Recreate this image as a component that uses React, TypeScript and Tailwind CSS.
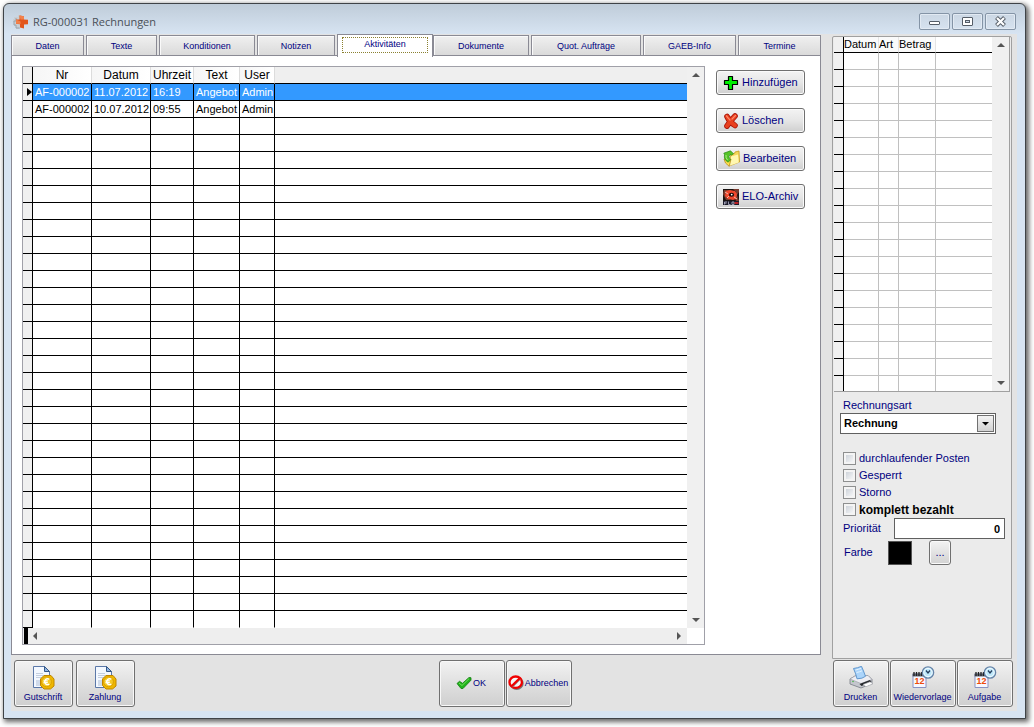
import type { ReactNode } from 'react';

type Entry = { nr: string; datum: string; uhrzeit: string; text: string; user: string };

const tabs = ['Daten', 'Texte', 'Konditionen', 'Notizen', 'Aktivitäten', 'Dokumente', 'Quot. Aufträge', 'GAEB-Info', 'Termine'];

const entries: Entry[] = [
  { nr: 'AF-000002', datum: '11.07.2012', uhrzeit: '16:19', text: 'Angebot', user: 'Admin' },
  { nr: 'AF-000002', datum: '10.07.2012', uhrzeit: '09:55', text: 'Angebot', user: 'Admin' },
];

const emptyRows = Array.from({ length: 30 }, (_, i) => i);
const sideRows = Array.from({ length: 20 }, (_, i) => i);

function AppIcon() {
  return (
    <svg width="16" height="16" viewBox="0 0 16 16">
      <path d="M1 3h4V1h3v12H6v2H3v-3H1V8H0V5h1z" fill="#c9ced3" />
      <path d="M3 4v3H1v4h2v3h4" fill="none" stroke="#9ba4ac" strokeWidth="1" />
      <path d="M6.500 1.500l4.500.8v3.200l4 .3v4.400l-4 .2v4L7 13.600v-3.400l-4-.4V5.400l3.500.1z" fill="#e2561c" />
      <path d="M6.500 1.500l4.500.8v3.200H7.500zM3 5.400l4.500 2v2.600L3 9.800z" fill="#f2814b" />
    </svg>
  );
}

function PlusIcon() {
  return (
    <svg width="16" height="16" viewBox="0 0 16 16">
      <path d="M5.500 1.500h4v4h5v4h-5v5h-4v-5h-4v-4h4z" fill="#00f000" stroke="#000" strokeWidth="1.200" strokeLinejoin="round" />
    </svg>
  );
}

function DeleteIcon() {
  return (
    <svg width="16" height="16" viewBox="0 0 16 16" strokeLinecap="round" fill="none">
      <path d="M4 3.500Q6.500 9 12 12.500M12 3Q7 8 4 13" stroke="#a81408" strokeWidth="5.600" />
      <path d="M4 3.500Q6.500 9 12 12.500M12 3Q7 8 4 13" stroke="#e8401f" strokeWidth="4" />
      <path d="M3.500 2.800Q5 5 7 7M12.500 2.500L9 6" stroke="#ff8a6a" strokeWidth="1.200" />
    </svg>
  );
}

function EditIcon() {
  return (
    <svg width="17" height="17" viewBox="0 0 17 17">
      <path d="M8 4.500l3.500-1 .5-1.500 4-1 .5 11L6 16z" fill="#f4d65a" stroke="#c79a1a" strokeWidth=".8" />
      <path d="M8 6.500l7-2 .8 8L6 16z" fill="#fff7b0" />
      <path d="M1 9l4 1.500 3-1.500-1.800 7.300L2.500 13z" fill="#ffe14c" stroke="#b8891a" strokeWidth=".8" />
      <path d="M5.200 12.200Q.300 9.500 1.600 4.800L.8 3.200 7.500.8l3 3-2.300 1.400L7 4.500Q4.500 6.500 7.500 9.800z" fill="#55c327" stroke="#258511" strokeWidth=".7" />
      <path d="M3 5Q2.500 8 4.500 10" fill="none" stroke="#a8ec7e" />
    </svg>
  );
}

function EloIcon() {
  return (
    <svg width="16" height="16" viewBox="0 0 16 16">
      <rect width="16" height="16" fill="#191311" />
      <path d="M1 1h6L4 5l3 6H3L0 5zM10 0h6v3l-2 3 2 6h-3l-2-5 2-4z" fill="#7a3a2d" />
      <path d="M3 2l4-1 5 1 2 3-1 5-3 1-5-1-3-3z" fill="#f0472c" />
      <ellipse cx="8.500" cy="5.800" rx="2.600" ry="2" fill="#1d0a08" />
      <circle cx="8.700" cy="5.600" r=".9" fill="#fff" />
      <path d="M2 3l3 2M11 8l3 2M4 9l2-2" stroke="#f6b6a7" />
      <path d="M0 12h16v4H0z" fill="#1b1b2b" />
      <path d="M1.500 15.500v-2.500H4M1.500 14.200h2M5.500 12.500v3h2M9 13h2v2.500H9z" fill="none" stroke="#b8b8cc" strokeWidth=".8" />
      <path d="M11.500 14h4" stroke="#f02020" strokeWidth="1.500" />
    </svg>
  );
}

function InvoiceIcon() {
  return (
    <svg width="24" height="24" viewBox="0 0 24 24">
      <path d="M2.500.500h11l5 5v16h-16z" fill="#f3f8ff" stroke="#5b78a8" />
      <path d="M13.500.500v5h5z" fill="#8fb4e4" stroke="#365987" />
      <path d="M5 7.500h7M5 9.500h11M5 11.500h10" stroke="#c3cedf" strokeWidth="1" />
      <path d="M5 14h6v6H5z" fill="#cfdaea" />
      <path d="M13 9.500h7l3 3.500v7l-3.500 3H13l-3.500-3.500V13z" fill="#eeb700" stroke="#c08600" />
      <circle cx="15.500" cy="15.800" r="4.900" fill="#f6ca25" stroke="#d49800" strokeWidth=".8" />
      <path d="M18.300 13.200q-4-1.600-4.600 2.500.6 4.100 4.600 2.500M12.500 14.900h4.300M12.500 16.600h4.300" fill="none" stroke="#fff" strokeWidth="1.400" />
    </svg>
  );
}

function CheckIcon() {
  return (
    <svg width="16" height="14" viewBox="0 0 16 14">
      <path d="M1 7.500l2.500-2.200 3 2L13 1.500l2 .200v2.500L7 12.500H5z" fill="#21b51b" stroke="#137b10" strokeWidth=".8" strokeLinejoin="round" />
      <path d="M3 7l3 2.500 7-6.800" fill="none" stroke="#74dd5e" />
    </svg>
  );
}

function CancelIcon() {
  return (
    <svg width="16" height="15" viewBox="0 0 16 15">
      <ellipse cx="8.700" cy="8.400" rx="6" ry="5.500" fill="none" stroke="#777" strokeWidth="2" />
      <ellipse cx="7.700" cy="7.200" rx="6.200" ry="5.700" fill="#f7f7f7" stroke="#f00000" strokeWidth="2.300" />
      <path d="M4.300 12L12.200 4" stroke="#888" strokeWidth="1.500" />
      <path d="M3.500 11.300L11.700 3.200" stroke="#f00000" strokeWidth="2.300" />
    </svg>
  );
}

function PrinterIcon() {
  return (
    <svg width="24" height="24" viewBox="0 0 24 24">
      <path d="M1 13l5-3 13-.500 4 4v4l-11 4.500L1 18z" fill="#c5c7ce" stroke="#777b84" strokeWidth=".8" />
      <path d="M1 13l5-3 13-.500 4 4-11 4z" fill="#ededf2" stroke="#989ba4" strokeWidth=".6" />
      <path d="M4.500 2.500q4-.500 8-2.200 2 4.500 4 10-3 2.500-8.500 2.500Q7 8 4.500 2.500z" fill="#abd4fa" stroke="#568fc8" strokeWidth=".9" />
      <path d="M6.500 4q3-.500 5.500-1.700M7.500 6.500q3-.500 5.500-1.700" stroke="#e4f3ff" fill="none" />
      <path d="M10.500 18l10.500-4 1.500 2-10 4z" fill="#26282c" />
      <path d="M14 18.500l7-2.700 3 2-7 2.900z" fill="#fff" stroke="#9a9ca2" strokeWidth=".6" />
      <circle cx="4" cy="15.500" r=".8" fill="#45b545" />
    </svg>
  );
}

function ReminderIcon() {
  return (
    <svg width="24" height="24" viewBox="0 0 24 24">
      <path d="M2 8h13v13.500H2z" fill="#f6f7ff" stroke="#8892c3" />
      <path d="M1.500 7.500h13v3h-13z" fill="#656b78" />
      <path d="M3 6v4M5.500 6v4M8 6v4M10.500 6v4" stroke="#222" strokeWidth="1.300" />
      <text x="3.500" y="18" fontSize="9" fontWeight="700" fill="#ef4a0a" fontFamily="Liberation Sans, sans-serif">12</text>
      <circle cx="17" cy="6.500" r="5.600" fill="#bfe8fa" stroke="#6684a8" strokeWidth="1.400" />
      <circle cx="17" cy="6.500" r="4.200" fill="none" stroke="#f4fcff" />
      <path d="M15 4.500l2 2.500 2-2.500" fill="none" stroke="#243d5d" strokeWidth="1.300" />
    </svg>
  );
}

const arrowPaths = {
  up: 'M4 10l4-4 4 4z',
  down: 'M4 6h8l-4 4z',
  left: 'M9 4v8L5 8z',
  right: 'M6 4l4 4-4 4z',
};

function ScrollArrow({ direction, label }: { direction: keyof typeof arrowPaths; label: string }) {
  return (
    <button type="button" aria-label={label} className="flex size-4 shrink-0 items-center justify-center">
      <svg width="16" height="16" viewBox="0 0 16 16"><path d={arrowPaths[direction]} fill="#555" /></svg>
    </button>
  );
}

function VerticalScroll() {
  return (
    <div className="flex w-[17px] shrink-0 flex-col items-center justify-between bg-[#f0f0f0]">
      <ScrollArrow direction="up" label="Nach oben" />
      <ScrollArrow direction="down" label="Nach unten" />
    </div>
  );
}

function ActionButton({ icon, children }: { icon: ReactNode; children: ReactNode }) {
  return (
    <button type="button" className="flex h-[25px] items-center gap-[3px] rounded-[3px] border border-[#707070] bg-linear-to-b from-[#f3f3f3] via-[#e6e6e6] to-[#cfcfcf] pl-1.5 text-[11px] whitespace-nowrap text-[#00007f] shadow-[inset_0_0_0_1px_#fafafa]">
      {icon}
      {children}
    </button>
  );
}

function FooterButton({ icon, children, size, inline = false }: { icon: ReactNode; children: ReactNode; size: string; inline?: boolean }) {
  return (
    <button
      type="button"
      className={`flex h-[47px] items-center justify-center rounded-[3px] border border-[#707070] bg-linear-to-b from-[#f2f2f2] from-0% via-[#e0e0e0] via-50% to-[#cfcfcf] whitespace-nowrap text-[#00007f] shadow-[inset_0_0_0_1px_#f8f8f8] ${inline ? 'flex-row gap-px pr-[2px] pb-[2px]' : 'flex-col pt-[3px] pr-px'} ${size}`}
    >
      {icon}
      <span className="text-[9px] leading-[14px]">{children}</span>
    </button>
  );
}

function WindowButton({ label, children }: { label: string; children: ReactNode }) {
  return (
    <button type="button" aria-label={label} className="flex h-[17px] w-[31px] items-center justify-center rounded-[2px] border border-[#8494a6] bg-linear-to-b from-[#cbd7e4] to-[#d6e2ef] shadow-[inset_0_0_0_1px_#e2eaf3]">
      {children}
    </button>
  );
}

function TitleBar() {
  return (
    <header className="flex h-[30px] items-center justify-between pr-[9px] pl-[9px]">
      <div className="flex items-center gap-1 pt-[5px]">
        <AppIcon />
        <h1 className="font-['Open_Sans',sans-serif] text-[11px] leading-4 text-[#4a5058]">RG-000031 Rechnungen</h1>
      </div>
      <div className="flex gap-[2px] pt-[5px]">
        <WindowButton label="Minimieren">
          <svg width="13" height="9" viewBox="0 0 13 9"><rect x="1.500" y="4.500" width="10" height="3" rx=".5" fill="#fff" stroke="#555d67" /></svg>
        </WindowButton>
        <WindowButton label="Maximieren">
          <svg width="13" height="9" viewBox="0 0 13 9"><rect x="1.500" y=".5" width="10" height="8" rx=".5" fill="#fff" stroke="#555d67" /><rect x="4.500" y="3.500" width="4" height="2" fill="#cbd7e4" stroke="#555d67" /></svg>
        </WindowButton>
        <WindowButton label="Schließen">
          <svg width="13" height="11" viewBox="0 0 13 11"><path d="M2.500 1.500l8 8M10.500 1.500l-8 8" stroke="#555d67" strokeWidth="4" /><path d="M3 2l7 7M10 2L3 9" stroke="#fff" strokeWidth="2.200" /></svg>
        </WindowButton>
      </div>
    </header>
  );
}

function TabBar() {
  return (
    <div role="tablist" className="grid h-[21px] grid-cols-[75fr_73fr_98fr_80fr_96fr_98fr_112fr_95fr_83fr] items-end">
      {tabs.map((tab) =>
        tab === 'Aktivitäten' ? (
          <button key={tab} type="button" role="tab" aria-selected="true" className="relative z-10 -mb-px h-[23px] border-x border-t border-[#8a8a94] bg-white px-1 pt-[2px] pb-1 text-[9px] text-[#00007f]">
            <span className="flex h-full items-center justify-center border border-dotted border-black bg-clip-padding outline-1 -outline-offset-1 outline-dotted outline-[#e8d850]/60">{tab}</span>
          </button>
        ) : (
          <button key={tab} type="button" role="tab" aria-selected="false" className="mr-[2px] h-[21px] truncate border-x border-t border-[#8a8a94] bg-linear-to-b from-[#f0f0f0] to-[#d9d9d9] pt-[2px] text-[9px] text-[#00007f] shadow-[inset_1px_1px_0_#fafafa] last:mr-0">
            {tab}
          </button>
        ),
      )}
    </div>
  );
}

const cell = 'h-[17px] overflow-hidden border-r border-b border-black p-0 pl-[2px] leading-4 whitespace-nowrap group-last:border-b-white';
const marker = 'border-r border-b border-black bg-[#f0f0f0] p-0';
const heading = 'h-[17px] border-r border-b border-r-[#dcdcdc] border-b-black bg-linear-to-r from-[#f6f6f6] to-white p-0 text-center font-normal';

function ActivityTable() {
  return (
    <div className="min-w-0 flex-1 border border-[#a0a0a8] bg-white">
      <div className="flex">
        <table className="min-w-0 flex-1 table-fixed border-separate border-spacing-0 text-[11px] text-black">
          <colgroup>
            <col className="w-[10px]" />
            <col className="w-[59px]" />
            <col className="w-[59px]" />
            <col className="w-[43px]" />
            <col className="w-[46px]" />
            <col className="w-[35px]" />
            <col />
          </colgroup>
          <thead>
            <tr className="text-[12px] leading-4">
              <th aria-label="Markierung" className={marker} />
              <th className={heading}>Nr</th>
              <th className={heading}>Datum</th>
              <th className={heading}>Uhrzeit</th>
              <th className={heading}>Text</th>
              <th className={heading}>User</th>
              <th aria-label="Leer" className="border-b border-black bg-[#efefef] p-0" />
            </tr>
          </thead>
          <tbody>
            {entries.map((e, i) => (
              <tr key={e.datum} className={i === 0 ? 'group bg-[#3399ff] text-white' : 'group'}>
                <td className={marker}>
                  {i === 0 && (
                    <svg width="9" height="10" viewBox="0 0 9 10" className="block"><path d="M4 1l5 4-5 4z" fill="#000" /></svg>
                  )}
                </td>
                <td className={cell}>{e.nr}</td>
                <td className={cell}>{e.datum}</td>
                <td className={cell}>{e.uhrzeit}</td>
                <td className={cell}>{e.text}</td>
                <td className={cell}>{e.user}</td>
                <td className="border-b border-black p-0" />
              </tr>
            ))}
            {emptyRows.map((r) => (
              <tr key={r} className="group">
                <td className={marker} />
                <td className={cell} />
                <td className={cell} />
                <td className={cell} />
                <td className={cell} />
                <td className={cell} />
                <td className="border-b border-black p-0 group-last:border-b-white" />
              </tr>
            ))}
          </tbody>
        </table>
        <VerticalScroll />
      </div>
      <div className="mr-[17px] flex h-4 items-center justify-between bg-[#eeeeee]">
        <div className="flex items-center">
          <span className="ml-px h-4 w-1 bg-black" />
          <ScrollArrow direction="left" label="Nach links" />
        </div>
        <ScrollArrow direction="right" label="Nach rechts" />
      </div>
    </div>
  );
}

const sideCell = 'h-[17px] border-r border-b border-[#c0c0c0] p-0 group-last:h-[15px] group-last:border-b-0';
const sideHeading = 'h-4 border-r border-b border-r-[#e4e4e4] border-b-black bg-[#fafafa] p-0 text-left font-normal whitespace-nowrap';

function SideTable() {
  return (
    <div className="mx-px flex border-r border-b border-[#a0a0a0] bg-white">
      <table className="min-w-0 flex-1 table-fixed border-separate border-spacing-0 text-[11px] leading-[15px] text-black">
        <colgroup>
          <col className="w-[10px]" />
          <col className="w-[35px]" />
          <col className="w-[20px]" />
          <col className="w-[37px]" />
          <col />
        </colgroup>
        <thead>
          <tr>
            <th aria-label="Markierung" className="border-r border-b border-black bg-[#f0f0f0] p-0" />
            <th className={sideHeading}>Datum</th>
            <th className={sideHeading}>Art</th>
            <th className={sideHeading}>Betrag</th>
            <th aria-label="Leer" className="border-b border-black p-0" />
          </tr>
        </thead>
        <tbody>
          {sideRows.map((r) => (
            <tr key={r} className="group">
              <td className="border-r border-b border-black bg-[#f0f0f0] p-0 group-last:border-b-0" />
              <td className={sideCell} />
              <td className={sideCell} />
              <td className={sideCell} />
              <td className="border-b border-[#c0c0c0] p-0 group-last:border-b-0" />
            </tr>
          ))}
        </tbody>
      </table>
      <VerticalScroll />
    </div>
  );
}

function Check({ label, strong = false }: { label: string; strong?: boolean }) {
  return (
    <label className="flex h-[17px] items-center gap-[3px]">
      <input type="checkbox" className="size-[13px] appearance-none border border-[#8e8f8f] bg-linear-to-br from-[#c4cad2] to-white shadow-[inset_0_0_0_2px_#f4f4f4] checked:bg-[#3399ff]" />
      <span className={strong ? 'text-[12px] font-bold text-black' : ''}>{label}</span>
    </label>
  );
}

function SidePanel() {
  return (
    <aside className="mt-[2px] mr-[5px] w-[180px] shrink-0 rounded-t-[2px] border border-[#a0a0a0] bg-[#ebebeb] text-[11px] text-[#00007f]">
      <SideTable />
      <div className="pr-[6px] pl-[7px]">
        <label htmlFor="art" className="block pt-[5px] pl-[3px] leading-4">Rechnungsart</label>
        <div className="relative mr-[9px] h-[21px]">
          <select id="art" className="block h-full w-full appearance-none border border-[#606060] bg-white pl-[3px] text-[11px] font-bold text-black">
            <option>Rechnung</option>
          </select>
          <span className="pointer-events-none absolute top-[2px] right-[2px] flex h-[17px] w-[17px] items-center justify-center border border-[#707070] bg-linear-to-b from-[#f3f3f3] to-[#d2d2d2]">
            <svg width="9" height="5" viewBox="0 0 9 5"><path d="M1 1h7L4.500 4.500z" fill="#000" /></svg>
          </span>
        </div>
        <div className="flex flex-col pt-4 pl-[3px]">
          <Check label="durchlaufender Posten" />
          <Check label="Gesperrt" />
          <Check label="Storno" />
          <Check label="komplett bezahlt" strong />
        </div>
        <div className="flex items-center justify-between pl-[3px]">
          <label htmlFor="prio">Priorität</label>
          <input id="prio" type="text" defaultValue="0" className="h-[21px] w-[111px] border border-[#606060] bg-white pr-1 text-right text-[11px] font-bold text-black" />
        </div>
        <div className="flex items-center pt-px pl-1">
          <span className="w-11">Farbe</span>
          <span className="size-6 border border-[#555] bg-black" />
          <button type="button" aria-label="Farbe wählen" className="ml-[17px] h-[25px] w-[22px] rounded-[3px] border border-[#707070] bg-linear-to-b from-[#f3f3f3] to-[#d2d2d2] shadow-[inset_0_0_0_1px_#fafafa]">...</button>
        </div>
      </div>
    </aside>
  );
}

export default function App() {
  return (
    <div className="flex min-h-screen bg-white pt-[3px] pr-2 pb-2 pl-[3px] font-['Liberation_Sans',Arial,sans-serif]">
      <div className="flex min-w-0 flex-1 flex-col rounded-t-[6px] border border-[#3f4347] bg-[#d7e4f2] bg-linear-to-b from-[#bfccd9] to-[#d7e4f2] to-[30px] pb-[7px] shadow-[2px_2px_5px_1px_rgba(0,0,0,0.6)]">
        <TitleBar />
        <main className="mr-2 ml-[7px] flex flex-1 flex-col bg-[#e3e3e3]">
          <div className="flex flex-1 gap-[11px]">
            <section className="mb-1 flex min-w-0 flex-1 flex-col">
              <TabBar />
              <div className="flex flex-1 items-start gap-[11px] border border-[#8a8a94] bg-white pt-[10px] pr-[15px] pb-[9px] pl-[10px]">
                <ActivityTable />
                <div className="flex w-[89px] flex-col gap-[13px] pt-1">
                  <ActionButton icon={<PlusIcon />}>Hinzufügen</ActionButton>
                  <ActionButton icon={<DeleteIcon />}>Löschen</ActionButton>
                  <ActionButton icon={<EditIcon />}>Bearbeiten</ActionButton>
                  <ActionButton icon={<EloIcon />}>ELO-Archiv</ActionButton>
                </div>
              </div>
            </section>
            <SidePanel />
          </div>
          <footer className="grid grid-cols-[425fr_394fr_180px] pt-px pr-1 pb-1 pl-[3px]">
            <div className="flex gap-[3px]">
              <FooterButton icon={<InvoiceIcon />} size="w-[59px]">Gutschrift</FooterButton>
              <FooterButton icon={<InvoiceIcon />} size="w-[59px]">Zahlung</FooterButton>
            </div>
            <div className="flex gap-px">
              <FooterButton icon={<CheckIcon />} size="w-[66px]" inline>OK</FooterButton>
              <FooterButton icon={<CancelIcon />} size="w-[66px]" inline>Abbrechen</FooterButton>
            </div>
            <div className="flex gap-px">
              <FooterButton icon={<PrinterIcon />} size="w-[56px]">Drucken</FooterButton>
              <FooterButton icon={<ReminderIcon />} size="w-[66px]">Wiedervorlage</FooterButton>
              <FooterButton icon={<ReminderIcon />} size="w-[56px]">Aufgabe</FooterButton>
            </div>
          </footer>
        </main>
      </div>
    </div>
  );
}
